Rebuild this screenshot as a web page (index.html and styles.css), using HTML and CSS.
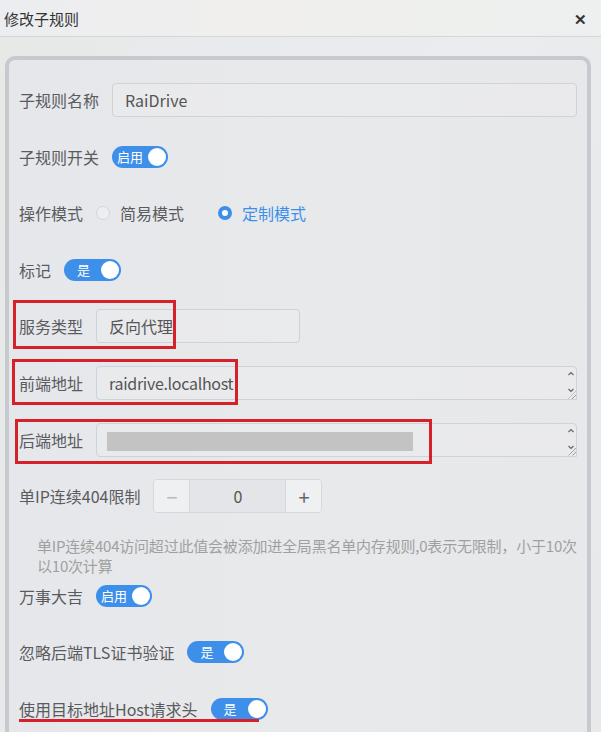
FILE: index.html
```html
<!DOCTYPE html>
<html lang="zh-CN">
<head>
    <meta charset="UTF-8">
    <meta name="viewport" content="width=device-width, initial-scale=1.0">
    <title>修改子规则</title>
    <link rel="stylesheet" href="styles.css">
</head>
<body>
    <!-- 弹窗头部 -->
    <div class="dialog-header">
        <span class="dialog-title">修改子规则</span>
        <span class="dialog-close">&#x2715;</span>
    </div>

    <!-- 表单主体 -->
    <div class="panel">
        <div class="form-row">
            <span class="label">子规则名称</span>
            <div class="input grow">RaiDrive</div>
        </div>

        <div class="form-row">
            <span class="label">子规则开关</span>
            <span class="switch"><span class="switch-text">启用</span><span class="knob"></span></span>
        </div>

        <div class="form-row">
            <span class="label">操作模式</span>
            <span class="radio"><span class="radio-dot"></span>简易模式</span>
            <span class="radio checked"><span class="radio-dot"></span>定制模式</span>
        </div>

        <div class="form-row">
            <span class="label">标记</span>
            <span class="switch wide"><span class="switch-text">是</span><span class="knob"></span></span>
        </div>

        <div class="form-row">
            <span class="label">服务类型</span>
            <div class="input select">反向代理</div>
            <span class="mark mark-service"></span>
        </div>

        <div class="form-row">
            <span class="label">前端地址</span>
            <div class="input grow textarea">
                raidrive.localhost
                <svg class="spin" width="8" height="26" viewBox="0 0 8 26">
                    <path d="M1.5 6 L4 3.5 L6.5 6" />
                    <path d="M1.5 20 L4 22.5 L6.5 20" />
                </svg>
                <span class="grip"></span>
            </div>
            <span class="mark mark-front"></span>
        </div>

        <div class="form-row">
            <span class="label">后端地址</span>
            <div class="input grow textarea">
                <span class="redacted"></span>
                <svg class="spin" width="8" height="26" viewBox="0 0 8 26">
                    <path d="M1.5 6 L4 3.5 L6.5 6" />
                    <path d="M1.5 20 L4 22.5 L6.5 20" />
                </svg>
                <span class="grip"></span>
            </div>
            <span class="mark mark-back"></span>
        </div>

        <div class="form-row">
            <span class="label">单IP连续404限制</span>
            <div class="number">
                <span class="num-btn">&minus;</span>
                <span class="num-value">0</span>
                <span class="num-btn">+</span>
            </div>
        </div>

        <p class="help">单IP连续404访问超过此值会被添加进全局黑名单内存规则,0表示无限制，小于10次<br>以10次计算</p>

        <div class="form-row tight">
            <span class="label">万事大吉</span>
            <span class="switch"><span class="switch-text">启用</span><span class="knob"></span></span>
        </div>

        <div class="form-row">
            <span class="label">忽略后端TLS证书验证</span>
            <span class="switch wide"><span class="switch-text">是</span><span class="knob"></span></span>
        </div>

        <div class="form-row">
            <span class="label">使用目标地址Host请求头</span>
            <span class="switch wide"><span class="switch-text">是</span><span class="knob"></span></span>
            <span class="mark mark-host"></span>
        </div>
    </div>
</body>
</html>
```

FILE: styles.css
```css
body {
    margin: 0;
    width: 601px;
    height: 732px;
    overflow: hidden;
    font-family: "Noto Sans CJK SC", "Noto Sans", sans-serif;
    color: #555;
    background: linear-gradient(100deg, #e6e9e6 0%, #e9eaed 30%, #ebecee 70%, #e8e9eb 100%);
}
.dialog-header {
    height: 36px;
    display: flex;
    align-items: center;
    justify-content: space-between;
    padding: 0 14px 0 4px;
    border-bottom: 1px solid #d3d5d8;
    background: linear-gradient(90deg, #ecedf0 0%, #f0efed 45%, #eef0ee 75%, #eeefef 100%);
}
.dialog-title {
    font-size: 15px;
    color: #333;
}
.dialog-close {
    font-size: 15px;
    font-weight: bold;
    color: #333;
}
.panel {
    margin: 19px 10px 0 5px;
    padding: 23px 10px 0 10px;
    border: 4px solid #c6c9ce;
    border-bottom: none;
    border-radius: 10px 10px 0 0;
    height: 660px;
    background: linear-gradient(90deg, #e5e7ea 0%, #e8e9eb 50%, #e7e8ea 100%);
}
.form-row {
    position: relative;
    display: flex;
    align-items: center;
    gap: 13px;
    height: 34px;
    margin-bottom: 22.6px;
}
.form-row.tight {
    margin-top: 3px;
}
.label {
    font-size: 16px;
    white-space: nowrap;
    color: #595b5f;
}
.input {
    position: relative;
    box-sizing: border-box;
    height: 34px;
    line-height: 32px;
    padding: 0 12px;
    font-size: 16px;
    color: #555;
    border: 1px solid #cfd2d6;
    border-radius: 4px;
    background: rgba(255, 255, 255, 0.12);
}
.grow {
    flex: 1;
}
.select {
    width: 204px;
}
.textarea {
    letter-spacing: -0.3px;
    border-radius: 4px 4px 0 4px;
}
.spin {
    position: absolute;
    right: 1px;
    top: 2px;
    fill: none;
    stroke: #666;
    stroke-width: 1.2;
}
.grip {
    position: absolute;
    right: 0;
    bottom: 0;
    width: 8px;
    height: 8px;
    background: repeating-linear-gradient(135deg, transparent 0 2px, #999 2px 3px);
    clip-path: polygon(100% 0, 100% 100%, 0 100%);
}
.redacted {
    position: absolute;
    left: 10px;
    top: 8px;
    width: 306px;
    height: 19px;
    background: #c3c3c4;
}
.switch {
    position: relative;
    display: inline-flex;
    align-items: center;
    box-sizing: border-box;
    width: 56px;
    height: 22px;
    padding-left: 5px;
    border-radius: 11px;
    background: #3d8fea;
}
.switch-text {
    font-size: 13px;
    color: #fff;
    line-height: 22px;
}
.switch.wide {
    width: 57px;
    padding-left: 13px;
}
.knob {
    position: absolute;
    right: 2px;
    top: 2px;
    width: 18px;
    height: 18px;
    border-radius: 50%;
    background: #fff;
}
.radio {
    display: inline-flex;
    align-items: center;
    gap: 10px;
    font-size: 16px;
    color: #595b5f;
    margin-right: 21px;
}
.radio-dot {
    box-sizing: border-box;
    width: 14px;
    height: 14px;
    border-radius: 50%;
    border: 1px solid #d4d6da;
    background: #eceef0;
}
.radio.checked {
    color: #3d8fea;
}
.radio.checked .radio-dot {
    border: 4.5px solid #3d8fea;
    background: #fff;
}
.number {
    display: flex;
    box-sizing: border-box;
    width: 169px;
    height: 34px;
    border: 1px solid #d6d8dc;
    border-radius: 4px;
    overflow: hidden;
}
.num-btn {
    width: 35px;
    display: flex;
    align-items: center;
    justify-content: center;
    font-size: 20px;
    color: #666;
    background: #eff0f2;
}
.num-btn:first-child {
    color: #bbb;
    border-right: 1px solid #d6d8dc;
}
.num-btn:last-child {
    border-left: 1px solid #d6d8dc;
}
.num-value {
    flex: 1;
    display: flex;
    align-items: center;
    justify-content: center;
    font-size: 16px;
    color: #555;
    background: #e3e5e8;
}
.help {
    margin: 0;
    padding-left: 18px;
    font-size: 15px;
    line-height: 20px;
    color: #a0a0a0;
    white-space: nowrap;
    letter-spacing: -0.2px;
}
.mark {
    position: absolute;
    box-sizing: border-box;
    border: 3px solid #d7212a;
}
.mark-service {
    left: -6px;
    top: -9px;
    width: 163px;
    height: 49px;
}
.mark-front {
    left: -7px;
    top: -7px;
    width: 226px;
    height: 46px;
}
.mark-back {
    left: -4px;
    top: -4px;
    width: 417px;
    height: 45px;
}
.mark-host {
    left: 0;
    top: 27px;
    width: 240px;
    height: 3px;
    border: none;
    background: #d7212a;
}
```
